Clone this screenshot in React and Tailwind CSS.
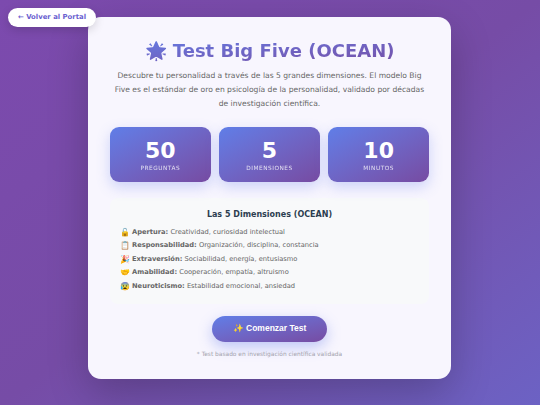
import React from 'react';

const stats = [
    { value: '50', label: 'Preguntas' },
    { value: '5', label: 'Dimensiones' },
    { value: '10', label: 'Minutos' },
];

const dimensions = [
    { icon: '🔓', name: 'Apertura:', text: 'Creatividad, curiosidad intelectual' },
    { icon: '📋', name: 'Responsabilidad:', text: 'Organización, disciplina, constancia' },
    { icon: '🎉', name: 'Extraversión:', text: 'Sociabilidad, energía, entusiasmo' },
    { icon: '🤝', name: 'Amabilidad:', text: 'Cooperación, empatía, altruismo' },
    { icon: '😰', name: 'Neuroticismo:', text: 'Estabilidad emocional, ansiedad' },
];

const App = () => {
    return (
        <div className="relative h-[405px] w-[540px] overflow-hidden bg-gradient-to-br from-[#7c4aae] via-[#764ca6] to-[#6c62c4] pt-[17px] font-['DejaVu_Sans',sans-serif]">
            <a className="absolute left-[8px] top-[8px] z-10 flex h-[19px] w-[88px] items-center justify-center rounded-full bg-white text-[6.9px] font-bold text-[#6a5fd0] shadow-[0_3px_10px_rgba(0,0,0,0.15)]">
                ← Volver al Portal
            </a>
            <div className="ml-[88px] h-[362px] w-[363px] rounded-[13px] bg-[#f8f6fe] px-[22px] pt-[20px] shadow-[0_14px_40px_rgba(0,0,0,0.22)]">
                <h1 className="bg-gradient-to-br from-[#5f7ee8] to-[#764ba2] bg-clip-text text-center text-[18px] leading-[27px] font-bold text-transparent">
                    🌟 Test Big Five (OCEAN)
                </h1>
                <p className="mt-[5px] text-center text-[7.6px] leading-[14px] text-[#666666]">
                    Descubre tu personalidad a través de las 5 grandes dimensiones. El modelo Big Five es el estándar de oro en psicología de la personalidad, validado por décadas de investigación científica.
                </p>
                <div className="mt-[16px] grid grid-cols-3 gap-[8.5px]">
                    {stats.map(stat => (
                        <div key={stat.label} className="flex h-[55px] flex-col items-center rounded-[9px] bg-gradient-to-br from-[#5f7ee8] to-[#764ba2] pt-[12px] text-white shadow-[0_5px_14px_rgba(102,126,234,0.3)]">
                            <div className="text-[22px] leading-[23px] font-bold">{stat.value}</div>
                            <div className="mt-[2px] text-[5.8px] leading-[9px] tracking-[0.5px] uppercase opacity-80">{stat.label}</div>
                        </div>
                    ))}
                </div>
                <div className="mt-[16px] h-[106px] rounded-[8px] bg-[#f8f9fa] px-[10px] pt-[10px]">
                    <h3 className="text-center text-[8px] leading-[13px] font-bold text-[#2c3e50]">Las 5 Dimensiones (OCEAN)</h3>
                    <ul className="mt-[4.5px]">
                        {dimensions.map(item => (
                            <li key={item.name} className="flex items-center text-[6.7px] leading-[13.5px] text-[#666666]">
                                <span className="w-[12px] font-['Noto_Color_Emoji',sans-serif] text-[8px]">{item.icon}</span>
                                <span><strong>{item.name}</strong> {item.text}</span>
                            </li>
                        ))}
                    </ul>
                </div>
                <div className="mt-[12px] flex justify-center">
                    <button className="flex h-[25.5px] w-[115px] items-center justify-center rounded-full bg-gradient-to-br from-[#5f7ee8] to-[#764ba2] font-['Liberation_Sans',sans-serif] text-[8.5px] font-bold text-white shadow-[0_5px_14px_rgba(102,126,234,0.4)]">
                        ✨ Comenzar Test
                    </button>
                </div>
                <p className="mt-[8px] text-center text-[5.9px] leading-[9px] text-[#a3a3ad]">* Test basado en investigación científica validada</p>
            </div>
        </div>
    );
};

export default App;
